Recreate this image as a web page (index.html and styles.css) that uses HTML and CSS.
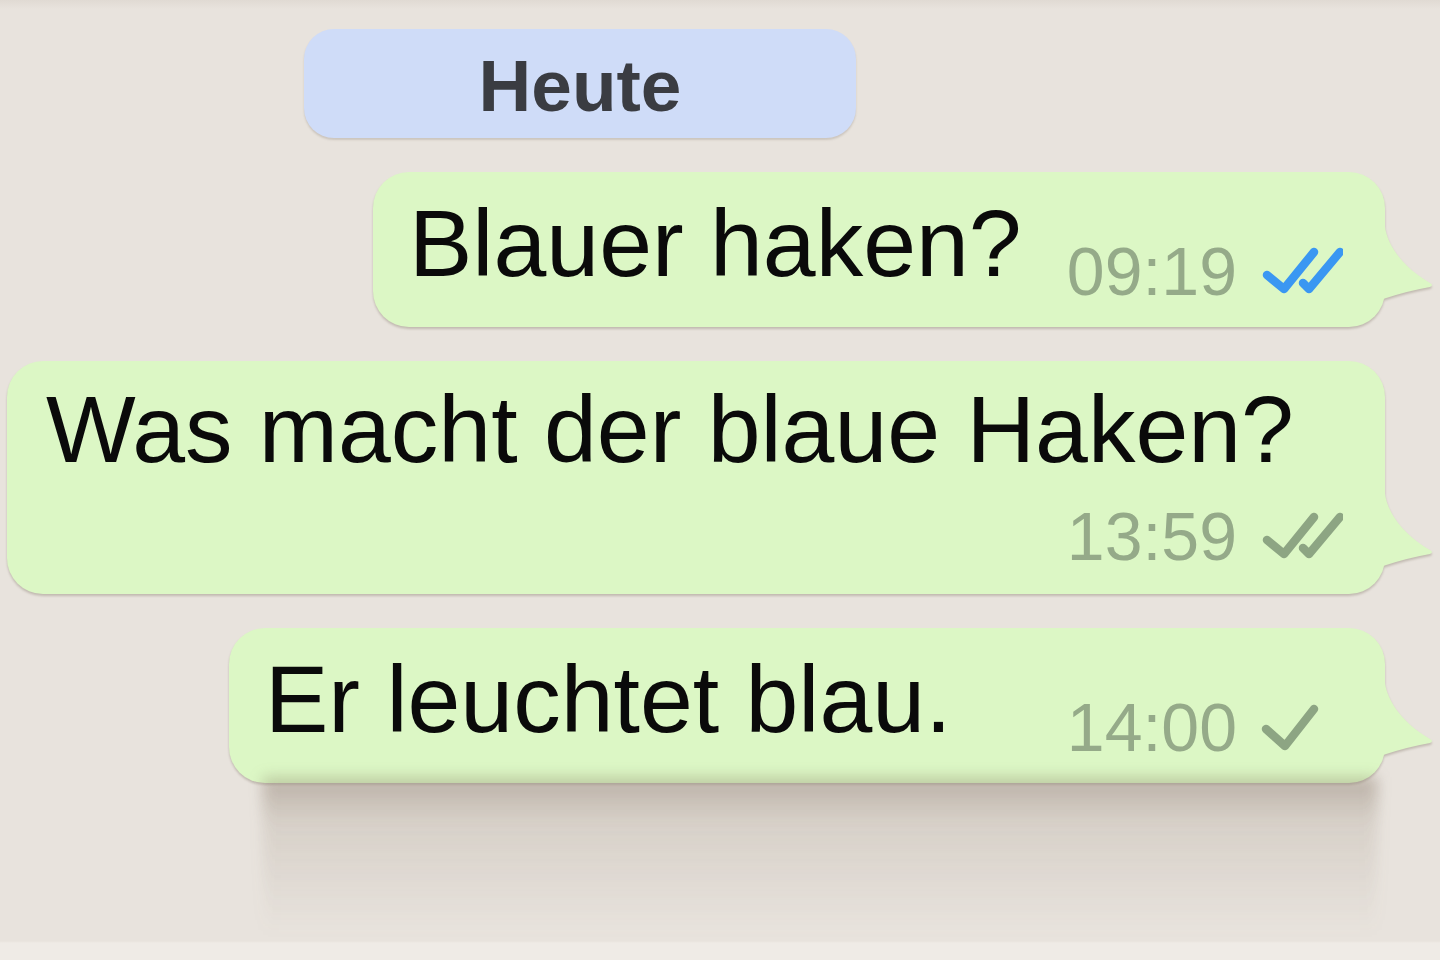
FILE: index.html
```html
<!DOCTYPE html>
<html lang="de">
<head>
<meta charset="utf-8">
<title>Chat</title>
<link rel="stylesheet" href="styles.css">
</head>
<body>
<main class="chat">
  <div class="day"><span class="day-pill">Heute</span></div>

  <div class="bubble msg-a">
    <span class="text">Blauer haken?</span>
    <span class="meta">
      <span class="time">09:19</span>
      <svg class="tick" viewBox="0 0 82 50" width="82" height="50" aria-hidden="true">
        <path d="M6 29 L23 43 L53 6" class="tick-blue"/>
        <path d="M42 37 L48 43 L79 6" class="tick-blue"/>
      </svg>
    </span>
    <svg class="tail" viewBox="0 0 100 100" width="100" height="100" aria-hidden="true">
      <path d="M38 0 L48 0 C50 15 62 38 93 56 Q97 58 93 60 Q70 64 46 72 L38 72 Z"/>
    </svg>
  </div>

  <div class="bubble bubble-tall msg-b">
    <span class="text">Was macht der blaue Haken?</span>
    <span class="meta">
      <span class="time">13:59</span>
      <svg class="tick" viewBox="0 0 82 50" width="82" height="50" aria-hidden="true">
        <path d="M6 29 L23 43 L53 6" class="tick-grey"/>
        <path d="M42 37 L48 43 L79 6" class="tick-grey"/>
      </svg>
    </span>
    <svg class="tail" viewBox="0 0 100 100" width="100" height="100" aria-hidden="true">
      <path d="M38 0 L48 0 C50 15 62 38 93 56 Q97 58 93 60 Q70 64 46 72 L38 72 Z"/>
    </svg>
  </div>

  <div class="bubble msg-c">
    <span class="text">Er leuchtet blau.</span>
    <span class="meta">
      <span class="time">14:00</span>
      <svg class="tick" viewBox="0 0 82 50" width="82" height="50" aria-hidden="true">
        <path d="M5 27 L24 44 L53 7" class="tick-grey"/>
      </svg>
    </span>
    <svg class="tail" viewBox="0 0 100 100" width="100" height="100" aria-hidden="true">
      <path d="M38 0 L48 0 C50 15 62 38 93 56 Q97 58 93 60 Q70 64 46 72 L38 72 Z"/>
    </svg>
  </div>
</main>
</body>
</html>
```
FILE: styles.css
```css
* { box-sizing: border-box; }

html, body {
  margin: 0;
  padding: 0;
}

body {
  width: 1440px;
  height: 960px;
  overflow: hidden;
  font-family: "Liberation Sans", Arial, Helvetica, sans-serif;
  background:
    linear-gradient(to bottom, rgba(120, 100, 80, 0.07), rgba(120, 100, 80, 0) 9px),
    linear-gradient(to bottom, #e8e3dd 0, #e8e3dd 941px, #efebe6 943px);
}

.chat {
  display: flex;
  flex-direction: column;
  align-items: flex-end;
  gap: 34px;
  padding: 29px 55px 0 0;
}

.day {
  align-self: flex-start;
  margin-left: 304px;
}

.day-pill {
  display: block;
  width: 552px;
  height: 109px;
  padding-top: 20px;
  border-radius: 30px;
  background: #cfdcf8;
  color: #3a3c42;
  font-weight: bold;
  font-size: 73px;
  line-height: 73px;
  text-align: center;
  box-shadow: 0 2px 2px rgba(110, 95, 80, 0.22);
}

.bubble {
  position: relative;
  display: flex;
  align-items: flex-end;
  justify-content: space-between;
  padding: 17px 42px 22px 36px;
  background: #dcf7c5;
  border-radius: 36px;
  filter: drop-shadow(0 2px 1px rgba(95, 80, 60, 0.28));
}

.msg-a { width: 1012px; }
.msg-b { width: 1378px; padding-left: 39px; }
.msg-c { width: 1156px; }

.bubble-tall {
  flex-direction: column;
  align-items: stretch;
  padding-top: 14px;
  padding-bottom: 24px;
}

.text {
  position: relative;
  z-index: 1;
  display: block;
  color: #0a0a0a;
  font-size: 95px;
  line-height: 109px;
  margin-bottom: 7px;
  white-space: nowrap;
}

.bubble-tall .text { margin-bottom: 18px; }

.meta {
  position: relative;
  z-index: 1;
  display: flex;
  align-items: flex-end;
  align-self: flex-end;
}

.time {
  color: #95aa89;
  font-size: 68px;
  line-height: 68px;
}

.tick {
  display: block;
  margin-left: 24px;
  margin-bottom: 9px;
}

.tick path {
  fill: none;
  stroke-width: 8.5;
  stroke-linejoin: round;
  stroke-linecap: round;
}

.tick-blue { stroke: #3a97f2; }
.tick-grey { stroke: #8da583; }

.tail {
  position: absolute;
  right: -52px;
  bottom: 0;
  display: block;
}

.tail path { fill: #dcf7c5; }

.msg-c::after {
  content: "";
  position: absolute;
  top: calc(100% - 6px);
  left: 34px;
  right: 8px;
  height: 160px;
  background: linear-gradient(to bottom, rgba(110, 90, 70, 0.3), rgba(110, 90, 70, 0.1) 28%, rgba(110, 90, 70, 0.03) 75%, rgba(110, 90, 70, 0) 100%);
  filter: blur(7px);
  z-index: -1;
  pointer-events: none;
}
```
